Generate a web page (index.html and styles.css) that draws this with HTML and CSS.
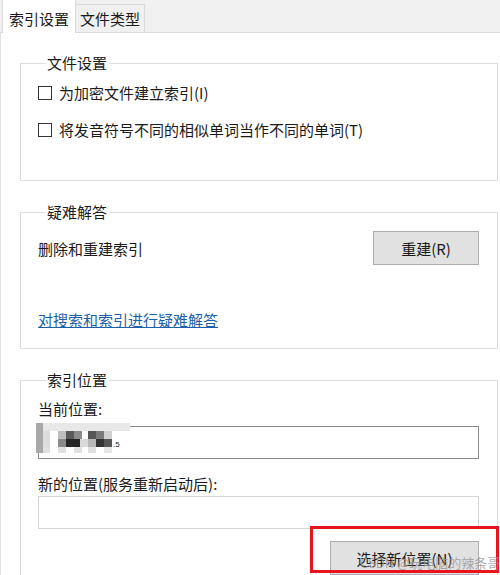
FILE: index.html
```html
<!DOCTYPE html>
<html lang="zh-CN">
<head>
    <meta charset="UTF-8">
    <title>索引选项 - 高级</title>
    <link rel="stylesheet" href="styles.css">
</head>
<body>
    <div class="tabs">
        <div class="tab active">索引设置</div>
        <div class="tab">文件类型</div>
    </div>

    <div class="panel">
        <fieldset class="group group-files">
            <legend>文件设置</legend>
            <label class="check first"><span class="box"></span>为加密文件建立索引(I)</label>
            <label class="check second"><span class="box"></span>将发音符号不同的相似单词当作不同的单词(T)</label>
        </fieldset>

        <fieldset class="group group-trouble">
            <legend>疑难解答</legend>
            <div class="row">
                <span>删除和重建索引</span>
                <button class="btn btn-rebuild">重建(R)</button>
            </div>
            <a class="link" href="#">对搜索和索引进行疑难解答</a>
        </fieldset>

        <fieldset class="group group-location">
            <legend>索引位置</legend>
            <div class="field-label">当前位置:</div>
            <div class="textbox current">
                <!-- pixelated path -->
                <svg class="mosaic" width="96" height="30" viewBox="0 0 96 30">
                    <rect x="0" y="0" width="7" height="30" fill="#a8a8a8"/>
                    <rect x="7" y="0" width="87" height="8" fill="#e8e8e8"/>
                    <rect x="7" y="8" width="7" height="16" fill="#dcdcdc"/>
                    <rect x="22" y="8" width="8" height="8" fill="#bdbdbd"/>
                    <rect x="30" y="8" width="8" height="8" fill="#5a5a5a"/>
                    <rect x="38" y="8" width="8" height="8" fill="#8c8c8c"/>
                    <rect x="52" y="8" width="8" height="8" fill="#555"/>
                    <rect x="60" y="8" width="8" height="8" fill="#7a7a7a"/>
                    <rect x="68" y="8" width="8" height="8" fill="#cfcfcf"/>
                    <rect x="22" y="16" width="8" height="8" fill="#8a8a8a"/>
                    <rect x="30" y="16" width="14" height="8" fill="#262626"/>
                    <rect x="44" y="16" width="8" height="8" fill="#dadada"/>
                    <rect x="52" y="16" width="8" height="8" fill="#b8b8b8"/>
                    <rect x="60" y="16" width="8" height="8" fill="#333"/>
                    <rect x="68" y="16" width="8" height="8" fill="#555"/>
                    <rect x="7" y="24" width="7" height="6" fill="#e0e0e0"/>
                    <rect x="22" y="24" width="8" height="6" fill="#e0e0e0"/>
                    <rect x="38" y="24" width="8" height="6" fill="#e0e0e0"/>
                    <rect x="52" y="24" width="8" height="6" fill="#e0e0e0"/>
                    <rect x="68" y="24" width="8" height="6" fill="#e6e6e6"/>
                    <text x="77" y="24" font-size="8" font-family="Liberation Sans, sans-serif" fill="#222">.5</text>
                </svg>
            </div>
            <div class="field-label second-label">新的位置(服务重新启动后):</div>
            <div class="textbox disabled"></div>
            <div class="actions">
                <button class="btn btn-select">选择新位置(N)</button>
            </div>
        </fieldset>

        <div class="highlight"></div>
        <div class="watermark">CSDN @玩电脑的辣条哥</div>
    </div>
</body>
</html>
```

FILE: styles.css
```css
body {
    margin: 0;
    background: white;
    font-family: "Noto Sans CJK SC", "Liberation Sans", sans-serif;
    font-size: 15px;
    color: #1a1a1a;
    width: 500px;
    height: 575px;
    overflow: hidden;
}
.tabs {
    display: flex;
    align-items: flex-end;
    height: 32px;
    padding-left: 2px;
    background: #f0f0f0;
    border-bottom: 1px solid #dadada;
}
.tab {
    height: 27px;
    line-height: 27px;
    padding: 0 4px;
    white-space: nowrap;
    background: #f0f0f0;
    border: 1px solid #d9d9d9;
    border-left: none;
    border-bottom: none;
}
.tab.active {
    height: 33px;
    line-height: 38px;
    margin-bottom: -1px;
    padding: 0 6px;
    background: white;
    border-left: 1px solid #d9d9d9;
}
.panel {
    position: relative;
    height: 522px;
    padding: 20px 2px 0 19px;
    border-left: 1px solid #e4e4e4;
}
.group {
    margin: 0;
    padding: 0 18px 0 17px;
    border: 1px solid #dcdcdc;
    min-width: 0;
}
.group legend {
    margin-left: 8px;
    padding: 0 2px 0 1px;
    line-height: 20px;
}
.group-trouble,
.group-location {
    margin-top: 21px;
}
.check {
    display: flex;
    align-items: center;
    line-height: 20px;
    gap: 7px;
}
.check.first {
    margin-top: 10px;
}
.check.second {
    margin-top: 17px;
    margin-bottom: 40px;
}
.box {
    width: 12px;
    height: 12px;
    border: 1px solid #333;
    background: white;
}
.row {
    display: flex;
    justify-content: space-between;
    align-items: center;
    margin-top: 9px;
}
.btn {
    font-family: inherit;
    font-size: 15px;
    color: #1a1a1a;
    background: #e1e1e1;
    border: 1px solid #adadad;
    padding: 0;
    height: 34px;
}
.btn-rebuild {
    width: 106px;
}
.link {
    display: block;
    margin: 45px 0 18px;
    line-height: 20px;
    color: #1a5fa8;
    width: max-content;
}
.field-label {
    line-height: 20px;
    margin-top: 9px;
}
.second-label {
    margin-top: 15px;
}
.textbox {
    position: relative;
    height: 31px;
    margin-top: 7px;
    border: 1px solid #a0a0a0;
    background: white;
}
.textbox.current {
    border-color: #8a8a8a;
}
.textbox.disabled {
    margin-top: 2px;
    border-color: #d6d6d6;
}
.mosaic {
    position: absolute;
    left: -3px;
    top: -4px;
}
.actions {
    display: flex;
    justify-content: flex-end;
    margin-top: 12px;
}
.btn-select {
    width: 149px;
    height: 34px;
}
.highlight {
    position: absolute;
    left: 309px;
    top: 493px;
    width: 183px;
    height: 41px;
    border: 3px solid #e8141b;
}
.watermark {
    position: absolute;
    left: 359px;
    top: 521px;
    font-size: 13px;
    line-height: 18px;
    white-space: nowrap;
    color: rgba(150, 150, 150, 0.8);
}
```
